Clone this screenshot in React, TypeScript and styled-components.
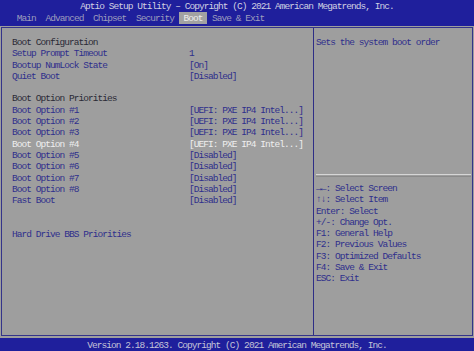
import React from "react";
import styled, { createGlobalStyle } from "styled-components";

const GlobalStyle = createGlobalStyle`
  html, body {
    margin: 0;
    padding: 0;
    background: #9e9e9e;
  }
`;

const Screen = styled.div`
  width: 474px;
  height: 351px;
  display: flex;
  flex-direction: column;
  font-family: "Liberation Mono", "DejaVu Sans Mono", monospace;
  font-size: 9.5px;
  letter-spacing: -0.95px;
  line-height: 11.3px;
  background: #9e9e9e;
  overflow: hidden;
`;

const Header = styled.div`
  height: 26px;
  background: #1f1f9c;
  display: flex;
  flex-direction: column;
`;

const Title = styled.div`
  color: #d0d0e2;
  text-align: center;
  height: 12px;
  line-height: 14px;
`;

const TabRow = styled.div`
  display: flex;
  padding-left: 12px;
  height: 12px;
  margin-top: 0;
`;

const Tab = styled.div<{ $active?: boolean }>`
  padding: 0 4.8px;
  line-height: 13px;
  color: ${(p) => (p.$active ? "#eeeeee" : "#9c9cbc")};
  background: ${(p) => (p.$active ? "#a2a2a2" : "transparent")};
`;

const Body = styled.div`
  flex: 1;
  padding: 1px 1px 2px 1px;
  display: flex;
`;

const Frame = styled.div`
  flex: 1;
  border: 1px solid #34348a;
  display: grid;
  grid-template-columns: 312px 1fr;
`;

const LeftPanel = styled.div`
  border-right: 1px solid #2e2e86;
  padding: 9px 0 0 10px;
`;

const Row = styled.div`
  display: grid;
  grid-template-columns: 177px 1fr;
  height: 11.3px;
  white-space: nowrap;
`;

const Cell = styled.span<{ $kind: "heading" | "item"; $selected?: boolean }>`
  color: ${(p) =>
    p.$selected ? "#eeeeee" : p.$kind === "heading" ? "#2a2a36" : "#2f2f8c"};
`;

const RightPanel = styled.div`
  display: flex;
  flex-direction: column;
  padding: 9px 1px 0 2px;
`;

const HelpText = styled.div`
  color: #2f2f8c;
  height: 137px;
`;

const Divider = styled.div`
  height: 1px;
  border-top: 1px solid #d6d6d6;
  border-bottom: 1px solid #8a8a8a;
`;

const KeyList = styled.div`
  padding-top: 6px;
  color: #2f2f8c;
  white-space: nowrap;
`;

const Footer = styled.div`
  height: 13px;
  background: #1f1f9c;
  color: #c4c4d8;
  text-align: center;
  line-height: 15px;
`;

type Item = { label: string; value?: string; kind: "heading" | "item" | "blank"; selected?: boolean };

const items: Item[] = [
  { label: "Boot Configuration", kind: "heading" },
  { label: "Setup Prompt Timeout", value: "1", kind: "item" },
  { label: "Bootup NumLock State", value: "[On]", kind: "item" },
  { label: "Quiet Boot", value: "[Disabled]", kind: "item" },
  { label: "", kind: "blank" },
  { label: "Boot Option Priorities", kind: "heading" },
  { label: "Boot Option #1", value: "[UEFI: PXE IP4 Intel...]", kind: "item" },
  { label: "Boot Option #2", value: "[UEFI: PXE IP4 Intel...]", kind: "item" },
  { label: "Boot Option #3", value: "[UEFI: PXE IP4 Intel...]", kind: "item" },
  { label: "Boot Option #4", value: "[UEFI: PXE IP4 Intel...]", kind: "item", selected: true },
  { label: "Boot Option #5", value: "[Disabled]", kind: "item" },
  { label: "Boot Option #6", value: "[Disabled]", kind: "item" },
  { label: "Boot Option #7", value: "[Disabled]", kind: "item" },
  { label: "Boot Option #8", value: "[Disabled]", kind: "item" },
  { label: "Fast Boot", value: "[Disabled]", kind: "item" },
  { label: "", kind: "blank" },
  { label: "", kind: "blank" },
  { label: "Hard Drive BBS Priorities", kind: "item" },
];

const tabs = ["Main", "Advanced", "Chipset", "Security", "Boot", "Save & Exit"];

const keys = [
  "\u2192\u2190: Select Screen",
  "\u2191\u2193: Select Item",
  "Enter: Select",
  "+/-: Change Opt.",
  "F1: General Help",
  "F2: Previous Values",
  "F3: Optimized Defaults",
  "F4: Save & Exit",
  "ESC: Exit",
];

export default function App() {
  return (
    <Screen>
      <GlobalStyle />
      <Header>
        <Title>Aptio Setup Utility – Copyright (C) 2021 American Megatrends, Inc.</Title>
        <TabRow>
          {tabs.map((t) => (
            <Tab key={t} $active={t === "Boot"}>
              {t}
            </Tab>
          ))}
        </TabRow>
      </Header>
      <Body>
        <Frame>
          <LeftPanel>
            {items.map((it, i) => (
              <Row key={i}>
                {it.kind === "blank" ? (
                  <span />
                ) : (
                  <>
                    <Cell $kind={it.kind} $selected={it.selected}>
                      {it.label}
                    </Cell>
                    <Cell $kind="item" $selected={it.selected}>
                      {it.value ?? ""}
                    </Cell>
                  </>
                )}
              </Row>
            ))}
          </LeftPanel>
          <RightPanel>
            <HelpText>Sets the system boot order</HelpText>
            <Divider />
            <KeyList>
              {keys.map((k) => (
                <div key={k}>{k}</div>
              ))}
            </KeyList>
          </RightPanel>
        </Frame>
      </Body>
      <Footer>Version 2.18.1263. Copyright (C) 2021 American Megatrends, Inc.</Footer>
    </Screen>
  );
}
